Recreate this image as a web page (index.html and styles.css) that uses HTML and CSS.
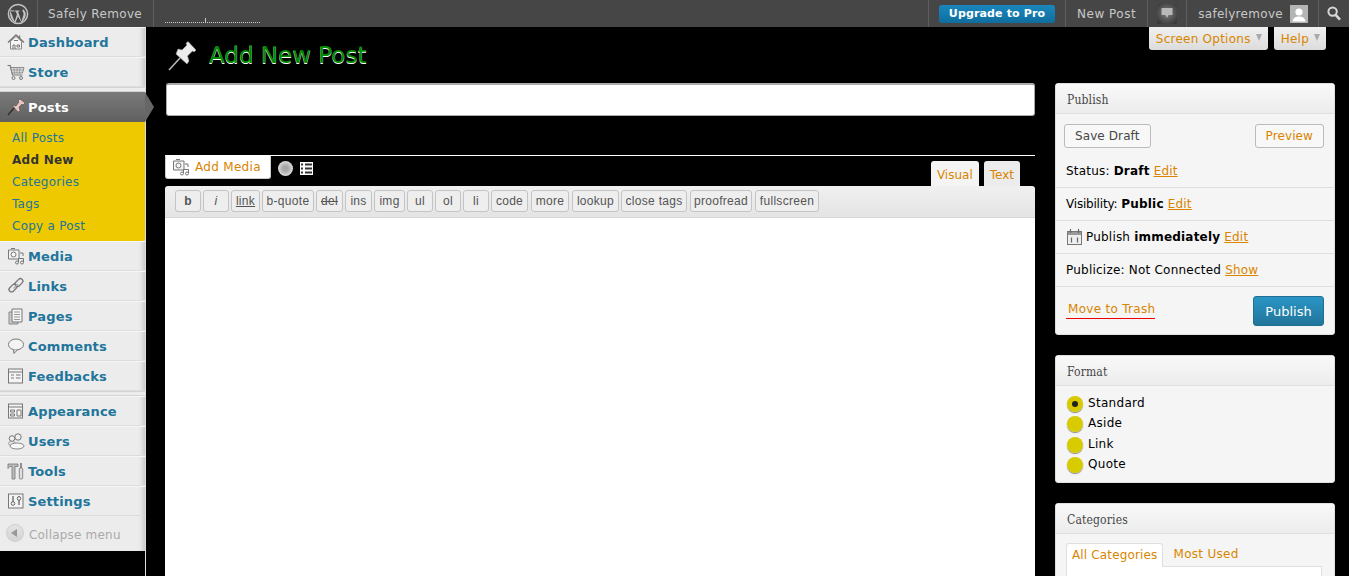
FILE: index.html
```html
<!DOCTYPE html>
<html lang="en">
<head>
    <meta charset="UTF-8">
    <title>Add New Post</title>
    <link rel="stylesheet" href="styles.css">
</head>
<body>
    <!-- === ADMIN BAR === -->
    <header class="adminbar">
        <div class="bar-item bar-logo">
            <svg width="22" height="22" viewBox="0 0 22 22"><circle cx="11" cy="11" r="9.6" fill="none" stroke="#c4c4c4" stroke-width="1.5"/><path d="M3.6 8.2 7.6 18.6 9.9 11.6 8.8 8.4H7.6V7.4H12.4V8.4H11.1L14.4 18.4 16.3 12.6C17 10.4 16.4 9.4 15.6 8.4 15.1 7.6 15.6 6.6 16.6 6.6 17.4 7.6 18.8 9.6 18.8 11 18.8 14.6 16.6 18 14.4 19.6L11 13.4 8.6 19.6C6 18.6 3.2 15 3 11 3 10 3.2 9 3.6 8.2Z" fill="#c4c4c4"/><path d="M3 7.4H7V8.4H3Z" fill="#c4c4c4"/></svg>
        </div>
        <div class="bar-item bar-site">Safely Remove</div>
        <div class="bar-item bar-spark"><span class="spark"></span></div>
        <div class="bar-right">
            <div class="bar-item bar-upgrade"><span class="upgrade">Upgrade to Pro</span></div>
            <div class="bar-item bar-new">New Post</div>
            <div class="bar-item bar-note">
                <span class="note"><svg width="12" height="11" viewBox="0 0 12 11"><path d="M.5 0H11.500V7H7.500L6 10 4.500 7H.5Z" fill="#b8b8b8"/></svg></span>
            </div>
            <div class="bar-item bar-user">safelyremove
                <span class="avatar"><svg width="18" height="18" viewBox="0 0 18 18"><rect width="18" height="18" fill="#b4b4b4"/><circle cx="9" cy="7" r="3.6" fill="#fff"/><path d="M2.5 16.5C3 12.5 6 11.5 9 11.5S15 12.5 15.5 16.5Z" fill="#fff"/></svg></span>
            </div>
            <div class="bar-item bar-search">
                <svg width="14" height="15" viewBox="0 0 14 15"><circle cx="5.6" cy="5.6" r="4.2" fill="none" stroke="#d8d8d8" stroke-width="2"/><path d="M8.6 8.8 13 13.6" stroke="#d8d8d8" stroke-width="2.6"/></svg>
            </div>
        </div>
    </header>

    <div class="wrap">
        <!-- === SIDE MENU === -->
        <nav class="menu">
            <a class="menu-item"><svg class="mi" viewBox="0 0 18 18"><path d="M1 9.500 9 2l8 7.500" fill="none" stroke="#777" stroke-width="1.400"/><path d="M3.500 8.500V16h11V8.500L9 3.500Z" fill="#f6f6f6" stroke="#888"/><path d="M6 16v-4h2v4M10 12h2.500v2H10zM7 7.500h4" fill="none" stroke="#777"/><path d="M12.500 2.500v3" stroke="#777" stroke-width="1.400"/></svg>Dashboard</a>
            <a class="menu-item"><svg class="mi" viewBox="0 0 18 18"><path d="M.5 2.500h2.700L5.500 12h10" fill="none" stroke="#777" stroke-width="1.200"/><path d="M3.800 4.500H17L15.500 10H5Z" fill="#ddd" stroke="#777" stroke-width=".8"/><path d="M7 4.500 7.500 10M10 4.500V10M13 4.500 12.500 10M4.500 7h12" stroke="#888" stroke-width=".7"/><circle cx="6.500" cy="15" r="1.500" fill="none" stroke="#777"/><circle cx="14" cy="15" r="1.500" fill="none" stroke="#777"/></svg>Store</a>
            <div class="menu-sep"></div>
            <a class="menu-item menu-current"><svg class="mi" viewBox="0 0 18 18"><path d="M1 17 7 10" stroke="#3a2a2a" stroke-width="1.300"/><path d="M5 7 9 8l3-4-1-1 2-2 5 4-2 2-1-1-3 3 1 4-2 1Z" fill="#e8c8c0" stroke="#5a4a4a" stroke-width=".6"/></svg>Posts</a>
            <div class="submenu">
                <a>All Posts</a>
                <a class="sub-active">Add New</a>
                <a>Categories</a>
                <a>Tags</a>
                <a>Copy a Post</a>
            </div>
            <a class="menu-item"><svg class="mi" viewBox="0 0 18 18"><path d="M1.500 3h10.500v9H1.500zM13 6h3v3M4 1.500h4" fill="#f4f4f4" stroke="#777"/><circle cx="6.500" cy="7.500" r="2.500" fill="none" stroke="#777"/><path d="M11.500 15V11.500h5V15" fill="none" stroke="#777"/><circle cx="10" cy="15.500" r="1.500" fill="none" stroke="#777"/><circle cx="15" cy="15.500" r="1.500" fill="none" stroke="#777"/></svg>Media</a>
            <a class="menu-item"><svg class="mi" viewBox="0 0 18 18"><rect x="-1" y="-2.500" width="9" height="5" rx="2.500" transform="translate(3.500 13.500) rotate(-45)" fill="none" stroke="#777" stroke-width="1.300"/><rect x="-1" y="-2.500" width="9" height="5" rx="2.500" transform="translate(9.500 8) rotate(-45)" fill="none" stroke="#777" stroke-width="1.300"/><path d="M6.500 11.500 11 7" stroke="#aaa" stroke-width="1.400"/></svg>Links</a>
            <a class="menu-item"><svg class="mi" viewBox="0 0 18 18"><path d="M2 5h9v12H2z" fill="#ccc" stroke="#888"/><path d="M5 2h10v13H5z" fill="#f4f4f4" stroke="#777"/><path d="M7 5h6M7 7.500h6M7 10h6M7 12.500h6" stroke="#999"/></svg>Pages</a>
            <a class="menu-item"><svg class="mi" viewBox="0 0 18 18"><ellipse cx="9" cy="7.500" rx="7.500" ry="5.500" fill="#f4f4f4" stroke="#777"/><path d="M6.500 12.800 7 16.500l3.500-3.700" fill="#ddd" stroke="#777"/></svg>Comments</a>
            <a class="menu-item"><svg class="mi" viewBox="0 0 18 18"><rect x="1.500" y="2" width="14" height="14" fill="#f4f4f4" stroke="#777"/><path d="M1.500 5h14M4 8h3M9 8h4.500M4 11h3M9 11h4.500" stroke="#777"/></svg>Feedbacks</a>
            <div class="menu-sep"></div>
            <a class="menu-item"><svg class="mi" viewBox="0 0 18 18"><rect x="1.500" y="2" width="14" height="14" fill="#f4f4f4" stroke="#777"/><path d="M1.500 5h14M3.500 8h4v2h-4zM3.500 12h4v2h-4zM10 8h4v6h-4z" fill="none" stroke="#777"/></svg>Appearance</a>
            <a class="menu-item"><svg class="mi" viewBox="0 0 18 18"><circle cx="5" cy="6.500" r="2.800" fill="#eee" stroke="#777"/><circle cx="11" cy="5" r="3.200" fill="#eee" stroke="#777"/><ellipse cx="5" cy="11.500" rx="3.500" ry="2" fill="#eee" stroke="#999"/><ellipse cx="10" cy="14" rx="7" ry="3" fill="#f8f8f8" stroke="#888"/></svg>Users</a>
            <a class="menu-item"><svg class="mi" viewBox="0 0 18 18"><path d="M1 2h10v2.500H8V17H5V4.500H3L1 6.500Z" fill="#bbb" stroke="#777" stroke-width=".8"/><path d="M14 1v5" stroke="#777" stroke-width="1.600"/><rect x="12.300" y="6" width="3.400" height="11" rx="1" fill="#ddd" stroke="#777" stroke-width=".8"/></svg>Tools</a>
            <a class="menu-item"><svg class="mi" viewBox="0 0 18 18"><rect x="1.500" y="2" width="14.500" height="14" fill="#f4f4f4" stroke="#777"/><path d="M6 4v9M12 4v9" stroke="#666" stroke-width="1.300"/><circle cx="6" cy="11.500" r="1.800" fill="#f4f4f4" stroke="#666"/><circle cx="12" cy="6.500" r="1.800" fill="#f4f4f4" stroke="#666"/></svg>Settings</a>
            <a class="menu-collapse"><span class="collapse-btn"></span>Collapse menu</a>
        </nav>

        <!-- === MAIN CONTENT === -->
        <main class="main">
            <div class="screen-tabs">
                <span class="screen-tab">Screen Options<i class="caret"></i></span>
                <span class="screen-tab">Help<i class="caret"></i></span>
            </div>
            <div class="page-title">
                <svg width="32" height="32" viewBox="0 0 32 32"><path d="M2 30 13 18" stroke="#b8b8b8" stroke-width="1.600"/><path d="M9 14 20 24l2-3-1.500-5 5-5 1.500 1 2-2L21 1.500l-2 2 1 1.500-5 5-4-1Z" fill="#ececec" stroke="#999" stroke-width=".6"/></svg>
                <h2>Add New Post</h2>
            </div>
            <div class="columns">
                <section class="post-body">
                    <div class="title-input"></div>
                    <div class="media-row">
                        <div class="media-left">
                            <span class="add-media"><svg width="18" height="18" viewBox="0 0 18 18"><path d="M1.500 3h10.500v9H1.500zM13 6h3v3M4 1.500h4" fill="#f4f4f4" stroke="#777"/><circle cx="6.500" cy="7.500" r="2.500" fill="none" stroke="#777"/><path d="M11.500 15V11.500h5V15" fill="none" stroke="#777"/><circle cx="10" cy="15.500" r="1.500" fill="none" stroke="#777"/><circle cx="15" cy="15.500" r="1.500" fill="none" stroke="#777"/></svg>Add Media</span>
                            <span class="round-icon"></span>
                            <svg class="form-icon" width="13" height="13" viewBox="0 0 13 13"><rect width="13" height="13" fill="#fff"/><path d="M1 2.500h2M5 2.500h7M1 6.500h2M5 6.500h7M1 10.500h2M5 10.500h7" stroke="#333" stroke-width="2"/></svg>
                        </div>
                        <div class="editor-tabs">
                            <span class="editor-tab tab-visual">Visual</span>
                            <span class="editor-tab">Text</span>
                        </div>
                    </div>
                    <div class="toolbar">
                        <span class="qt qt-b">b</span>
                        <span class="qt qt-i">i</span>
                        <span class="qt qt-link">link</span>
                        <span class="qt qt-quote">b-quote</span>
                        <span class="qt qt-del">del</span>
                        <span class="qt qt-ins">ins</span>
                        <span class="qt qt-img">img</span>
                        <span class="qt qt-w">ul</span>
                        <span class="qt qt-w">ol</span>
                        <span class="qt qt-w">li</span>
                        <span class="qt qt-code">code</span>
                        <span class="qt qt-more">more</span>
                        <span class="qt qt-lookup">lookup</span>
                        <span class="qt qt-close">close tags</span>
                        <span class="qt qt-proof">proofread</span>
                        <span class="qt qt-full">fullscreen</span>
                    </div>
                    <div class="editor-area"></div>
                </section>

                <aside class="side">
                    <div class="box">
                        <h3>Publish</h3>
                        <div class="pub-buttons">
                            <span class="btn">Save Draft</span>
                            <span class="btn btn-link">Preview</span>
                        </div>
                        <div class="pub-row pub-status">Status: <b>Draft</b> <a>Edit</a></div>
                        <div class="pub-row"><span class="pub-vis">Visibility:</span> <b>Public</b> <a>Edit</a></div>
                        <div class="pub-row">
                            <svg class="cal" width="15" height="16" viewBox="0 0 15 16"><rect x=".5" y="2.500" width="14" height="13" fill="#eee" stroke="#777"/><path d="M1 3h13v3H1z" fill="#999"/><path d="M3.500 0v4M11.500 0v4M4.500 8.500v5M10.500 8.500v5" stroke="#666" stroke-width="1.200"/></svg>
                            Publish <b>immediately</b> <a>Edit</a>
                        </div>
                        <div class="pub-row"><span class="pub-wide">Publicize: Not Connected</span> <a>Show</a></div>
                        <div class="pub-actions">
                            <a class="trash">Move to Trash</a>
                            <span class="btn-primary">Publish</span>
                        </div>
                    </div>

                    <div class="box">
                        <h3>Format</h3>
                        <div class="formats">
                            <label class="format"><span class="radio radio-on"></span>Standard</label>
                            <label class="format"><span class="radio"></span>Aside</label>
                            <label class="format"><span class="radio"></span>Link</label>
                            <label class="format"><span class="radio"></span>Quote</label>
                        </div>
                    </div>

                    <div class="box">
                        <h3>Categories</h3>
                        <div class="cat-body">
                            <div class="cat-tabs">
                                <span class="cat-tab cat-on">All Categories</span>
                                <span class="cat-tab cat-off">Most Used</span>
                            </div>
                            <div class="cat-panel"></div>
                        </div>
                    </div>
                </aside>
            </div>
        </main>
    </div>
</body>
</html>
```

FILE: styles.css
```css
/* === PAGE === */
html, body {
    margin: 0;
    height: 576px;
    overflow: hidden;
}

body {
    background-color: #000;
    font-family: "DejaVu Sans", sans-serif;
    font-size: 12px;
    color: #000;
}

a {
    color: #d98500;
}

/* === ADMIN BAR === */
.adminbar {
    display: flex;
    height: 27px;
    background-color: #464646;
    color: #c8c8c8;
    font-size: 12px;
}

.bar-item {
    display: flex;
    align-items: center;
    padding: 0 11px;
    border-right: 1px solid #5e5e5e;
    white-space: nowrap;
}

.bar-logo {
    width: 38px;
    box-sizing: border-box;
    padding: 0 0 0 7px;
}

.bar-site {
    width: 116px;
    box-sizing: border-box;
    padding-left: 10px;
    letter-spacing: 0.35px;
}

.bar-spark {
    border-right: none;
    padding: 0 0 0 11px;
}

.spark {
    position: relative;
    display: block;
    width: 95px;
    height: 4px;
    margin-top: 14px;
    border-bottom: 1px dotted #c8c8c8;
}

.spark::after {
    content: "";
    position: absolute;
    left: 40px;
    top: 0;
    width: 1px;
    height: 4px;
    background-color: #c8c8c8;
}

.bar-right {
    display: flex;
    margin-left: auto;
    border-left: 1px solid #5e5e5e;
}

.bar-upgrade {
    padding: 0 10px 0 10px;
}

.upgrade {
    display: block;
    width: 116px;
    height: 18px;
    line-height: 18px;
    text-align: center;
    background: linear-gradient(#1a87bd, #0f6d9e);
    border-radius: 3px;
    color: #fff;
    font-weight: bold;
    font-size: 11px;
    letter-spacing: 0.15px;
}

.bar-new {
    letter-spacing: 0.5px;
}

.bar-note {
    padding: 0 9px;
}

.note {
    display: flex;
    align-items: center;
    justify-content: center;
    width: 20px;
    height: 20px;
    border-radius: 3px;
    background: radial-gradient(circle at 50% 45%, #777 10%, #555 50%, #2e2e2e);
}

.bar-user {
    padding: 0 10px 0 11px;
    letter-spacing: 0.3px;
}

.avatar {
    display: block;
    width: 18px;
    height: 18px;
    margin-left: 7px;
}

.bar-search {
    border-right: none;
    padding: 0 8px;
    width: 14px;
}

/* === LAYOUT === */
.wrap {
    display: flex;
    height: 549px;
}

/* === SIDE MENU === */
.menu {
    flex: 0 0 145px;
    align-self: flex-start;
    background-color: #ececec;
    box-shadow: inset -6px 0 5px -4px rgba(0, 0, 0, 0.18);
    position: relative;
    z-index: 1;
}

.menu-item {
    display: flex;
    align-items: center;
    height: 30px;
    box-sizing: border-box;
    padding-left: 7px;
    border-top: 1px solid #f6f6f6;
    border-bottom: 1px solid #dcdcdc;
    font-weight: bold;
    font-size: 13px;
    letter-spacing: 0.15px;
    color: #21759b;
}

.mi {
    flex: none;
    width: 18px;
    height: 18px;
    margin-right: 3px;
}

.menu-sep {
    height: 3px;
    background-color: #ececec;
    border-top: 1px solid #d4d4d4;
    border-bottom: 1px solid #d4d4d4;
}

.menu-current {
    position: relative;
    background: linear-gradient(#7a7a7a, #606060);
    border: none;
    color: #fff;
    width: 145px;
}

.menu-current::after {
    content: "";
    position: absolute;
    left: 145px;
    top: 0;
    border-left: 9px solid #666;
    border-top: 15px solid transparent;
    border-bottom: 15px solid transparent;
}

.submenu {
    display: flex;
    flex-direction: column;
    height: 119px;
    box-sizing: border-box;
    padding-top: 5px;
    background-color: #eec900;
    border-radius: 0 0 3px 0;
}

.submenu a {
    display: block;
    height: 22px;
    line-height: 22px;
    padding-left: 12px;
    color: #21759b;
    letter-spacing: 0.25px;
}

.submenu .sub-active {
    color: #333;
    font-weight: bold;
}

.menu-collapse {
    display: flex;
    align-items: center;
    box-sizing: border-box;
    height: 35px;
    padding: 2px 0 0 6px;
    color: #aaa;
    letter-spacing: 0.2px;
}

.collapse-btn {
    position: relative;
    width: 16px;
    height: 16px;
    margin: -3px 5px 0 0;
    border-radius: 50%;
    background: linear-gradient(#e4e4e4, #d4d4d4);
    border: 1px solid #cfcfcf;
}

.collapse-btn::after {
    content: "";
    position: absolute;
    left: 4px;
    top: 4px;
    border-right: 6px solid #999;
    border-top: 4px solid transparent;
    border-bottom: 4px solid transparent;
}

/* === MAIN === */
.main {
    flex: 1;
    min-width: 0;
    position: relative;
    border-left: 1px solid #ddd;
    padding-left: 19px;
}

.screen-tabs {
    position: absolute;
    top: 0;
    right: 23px;
    display: flex;
    gap: 6px;
}

.screen-tab {
    display: flex;
    align-items: center;
    height: 23px;
    padding: 0 6px 0 7px;
    background: linear-gradient(#f0f0f0, #dcdcdc);
    border-radius: 0 0 3px 3px;
    color: #d98500;
    letter-spacing: 0.25px;
}

.caret {
    margin-left: 5px;
    margin-top: -2px;
    border-top: 7px solid #aaa;
    border-left: 3px solid transparent;
    border-right: 3px solid transparent;
}

.page-title {
    display: flex;
    align-items: center;
    height: 56px;
}

.page-title svg {
    margin-left: 2px;
    margin-top: 1px;
}

.page-title h2 {
    margin: 0 0 0 10px;
    font-size: 23px;
    font-weight: normal;
    color: #008a00;
    text-shadow: 0 1px 0 #fff;
}

.columns {
    display: flex;
    align-items: flex-start;
}

.post-body {
    flex: 0 0 870px;
}

.title-input {
    height: 30px;
    margin-left: 1px;
    background-color: #fff;
    border: 1px solid #aaa;
    border-top-width: 2px;
    border-radius: 3px;
}

/* === EDITOR === */
.media-row {
    display: flex;
    justify-content: space-between;
    height: 30px;
    margin-top: 39px;
    border-top: 1px solid #fff;
}

.media-left {
    display: flex;
    align-items: flex-start;
}

.add-media {
    display: flex;
    align-items: center;
    box-sizing: border-box;
    width: 106px;
    height: 23px;
    padding-left: 6px;
    background-color: #fff;
    border: 1px solid #ccc;
    border-top: none;
    border-radius: 0 0 3px 3px;
    color: #d98500;
    letter-spacing: 0.3px;
}

.add-media svg {
    margin-right: 5px;
}

.round-icon {
    width: 15px;
    height: 15px;
    margin: 5px 0 0 7px;
    border-radius: 50%;
    background: radial-gradient(circle, #a8a8a8 25%, #dcdcdc 70%, #b0b0b0);
}

.form-icon {
    margin: 6px 0 0 7px;
}

.editor-tabs {
    display: flex;
    align-items: flex-end;
    gap: 5px;
    height: 30px;
    margin-right: 15px;
}

.editor-tab {
    display: block;
    box-sizing: border-box;
    height: 25px;
    line-height: 29px;
    padding: 0 6px;
    background-color: #ececec;
    border-radius: 3px 3px 0 0;
    color: #d98500;
}

.tab-visual {
    background-color: #f4f4f4;
}

.toolbar {
    display: flex;
    gap: 2px;
    box-sizing: border-box;
    height: 32px;
    padding: 4px 0 0 10px;
    background: linear-gradient(#f0f0f0, #e4e4e4);
    border-bottom: 1px solid #d8d8d8;
    border-radius: 3px 3px 0 0;
}

.qt {
    display: block;
    box-sizing: border-box;
    height: 22px;
    line-height: 20px;
    padding: 0;
    border: 1px solid #c4c4c4;
    border-radius: 3px;
    background-color: #eee;
    font-family: "Liberation Sans", sans-serif;
    font-size: 12px;
    letter-spacing: 0.3px;
    color: #555;
    text-align: center;
}

.qt-b,
.qt-i,
.qt-w {
    width: 26px;
}

.qt-b {
    font-weight: bold;
}

.qt-i {
    font-style: italic;
}

.qt-link {
    width: 29px;
    text-decoration: underline;
}

.qt-quote {
    width: 52px;
}

.qt-del {
    width: 27px;
    text-decoration: line-through;
}

.qt-ins {
    width: 27px;
}

.qt-img {
    width: 31px;
}

/* widths follow the reference buttons, the gap varies by a pixel there */
.qt-code {
    width: 37px;
}

.qt-more {
    width: 38px;
    margin-left: 1px;
}

.qt-lookup {
    width: 47px;
    margin-left: 1px;
}

.qt-close {
    width: 66px;
}

.qt-proof {
    width: 62px;
    margin-left: 1px;
}

.qt-full {
    width: 64px;
    margin-left: 1px;
}

.editor-area {
    height: 400px;
    background-color: #fff;
}

/* === SIDE BOXES === */
.side {
    flex: 0 0 280px;
    margin-left: 20px;
}

.box {
    margin-bottom: 20px;
    background-color: #f5f5f5;
    border-radius: 3px;
    border: 1px solid #dfdfdf;
    box-sizing: border-box;
}

.box h3 {
    margin: 0;
    height: 30px;
    box-sizing: border-box;
    padding: 3px 0 0 11px;
    line-height: 27px;
    background: linear-gradient(#f9f9f9, #ececec);
    border-bottom: 1px solid #dfdfdf;
    font-family: "DejaVu Serif", serif;
    font-stretch: condensed;
    font-size: 12px;
    letter-spacing: 0.15px;
    font-weight: normal;
    color: #464646;
}

.pub-buttons {
    display: flex;
    justify-content: space-between;
    padding: 10px 10px 0 8px;
    height: 24px;
}

.btn {
    box-sizing: border-box;
    height: 24px;
    line-height: 23px;
    padding: 0 10px;
    background-color: #f8f8f8;
    border: 1px solid #bbb;
    border-radius: 3px;
    color: #464646;
    letter-spacing: 0.1px;
}

.btn-link {
    color: #d98500;
}

.pub-row {
    display: flex;
    align-items: center;
    gap: 4px;
    height: 32px;
    padding-left: 10px;
    border-top: 1px solid #dfdfdf;
    letter-spacing: 0.2px;
}

.pub-status {
    border-top: none;
    height: 39px;
    padding-top: 7px;
    box-sizing: border-box;
}

.pub-vis {
    letter-spacing: -0.2px;
}

.pub-wide {
    letter-spacing: 0.22px;
}

.pub-row a {
    text-decoration: underline;
}

.cal {
    margin-left: 1px;
}

.pub-actions {
    display: flex;
    justify-content: space-between;
    align-items: center;
    height: 47px;
    padding: 0 10px;
    border-top: 1px solid #dfdfdf;
}

.trash {
    padding: 0 0 2px 2px;
    border-bottom: 1px solid #e00;
    letter-spacing: 0.3px;
}

.btn-primary {
    box-sizing: border-box;
    width: 71px;
    height: 30px;
    line-height: 30px;
    text-align: center;
    background: linear-gradient(#2a95c5, #21759b);
    border: 1px solid #1f6f93;
    border-radius: 3px;
    color: #fff;
    font-size: 13px;
}

.formats {
    display: flex;
    flex-direction: column;
    padding: 8px 0 7px 11px;
}

.format {
    display: flex;
    align-items: flex-start;
    height: 20px;
    line-height: 18px;
    letter-spacing: 0.3px;
}

.format:nth-child(2) {
    height: 21px;
}

.radio {
    position: relative;
    width: 16px;
    height: 16px;
    margin: 2px 5px 0 0;
    border-radius: 50%;
    background: radial-gradient(circle, #d8cc00 60%, #c4b800);
    box-shadow: 0 1px 1px #888;
}

.radio-on::after {
    content: "";
    position: absolute;
    left: 5px;
    top: 5px;
    width: 6px;
    height: 6px;
    border-radius: 50%;
    background-color: #222;
}

.cat-body {
    padding: 9px 12px 0 10px;
}

.cat-tabs {
    display: flex;
    height: 24px;
}

.cat-tab {
    padding: 0 6px;
    line-height: 23px;
    color: #d98500;
    letter-spacing: 0.15px;
}

.cat-off {
    padding-left: 7px;
    letter-spacing: 0.3px;
}

.cat-on {
    padding: 0 5px;
    background-color: #fff;
    border: 1px solid #dfdfdf;
    border-bottom: none;
    border-radius: 3px 3px 0 0;
    margin-right: 3px;
}

.cat-panel {
    height: 60px;
    background-color: #fff;
    border: 1px solid #dfdfdf;
    margin-top: -1px;
}
```
